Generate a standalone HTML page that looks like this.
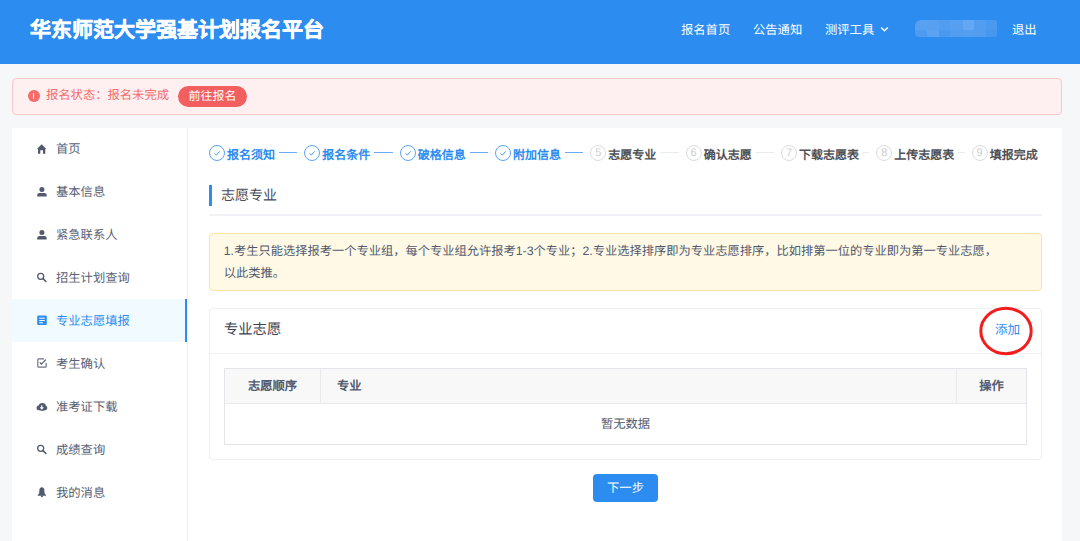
<!DOCTYPE html>
<html lang="zh-CN"><head><meta charset="utf-8">
<style>
*{box-sizing:border-box;margin:0;padding:0}
html,body{width:1080px;height:541px;overflow:hidden}
body{position:relative;text-rendering:geometricPrecision;background:#f5f7f9;font-family:"Liberation Sans",sans-serif;color:#515a6e}
.a{position:absolute;white-space:nowrap}
.hdr{left:0;top:0;width:1080px;height:64px;background:#2d8cf0}
.ttl{left:30px;top:16.5px;font-size:21px;line-height:28px;font-weight:bold;color:#fff;-webkit-text-stroke:0.5px #fff}
.nav{top:21px;font-size:12.3px;line-height:19px;color:#fff}
.alert{left:12px;top:78px;width:1050px;height:37px;border:1px solid #fbc8c8;border-radius:4px;background:#fef0f0}
.side{left:12px;top:128px;width:175px;height:413px;background:#fff}
.sdiv{left:187px;top:128px;width:1px;height:413px;background:#edeff2}
.main{left:188px;top:128px;width:874px;height:413px;background:#fff}
.mi{left:12px;width:175px;height:43px;font-size:12.3px;line-height:44px;color:#5a6173}
.mi span{position:absolute;left:44px;top:0}
.mi svg{position:absolute;left:25px;top:16px}
.mi.act{background:#f0faff;color:#2d8cf0;border-right:2px solid #2d8cf0}
.st{top:145px;height:16px}
.circ{position:absolute;left:0;top:0;width:16px;height:16px;border:1px solid #5aa5f3;border-radius:50%;font-size:11px;line-height:14px;text-align:center;color:#cdcdcd}
.circ.g{border-color:#dcdcdc}
.stt{position:absolute;left:18px;top:-0.5px;font-size:12px;line-height:20px;font-weight:bold;color:#2d8cf0}
.stt.g{color:#4f5257}
.tail{position:absolute;top:7px;height:1px;background:#68abf4}
.tail.g{background:#e8eaec}
</style></head><body>
<div class="a hdr"></div>
<div class="a ttl">华东师范大学强基计划报名平台</div>
<div class="a nav" style="left:681px">报名首页</div>
<div class="a nav" style="left:753px">公告通知</div>
<div class="a nav" style="left:825px">测评工具</div>
<svg class="a" style="left:880px;top:26px" width="9" height="7" viewBox="0 0 9 7"><path d="M1.2 1.5 L4.5 4.8 L7.8 1.5" fill="none" stroke="#fff" stroke-width="1.4"/></svg>
<div class="a nav" style="left:1012px">退出</div>
<div class="a" style="left:915px;top:19.7px;width:82px;height:17.8px;border-radius:6px 2px 2px 4px;overflow:hidden"><div class="a" style="left:0.0px;top:0;width:12.5px;height:10.3px;background:#58a0f2"></div><div class="a" style="left:0.0px;top:10.2px;width:12.5px;height:7.6px;background:#4f9bf0"></div><div class="a" style="left:12.2px;top:0;width:12.1px;height:10.3px;background:#57a0f1"></div><div class="a" style="left:12.2px;top:10.2px;width:12.1px;height:7.6px;background:#5ba3f2"></div><div class="a" style="left:24.0px;top:0;width:11.5px;height:10.3px;background:#529df0"></div><div class="a" style="left:24.0px;top:10.2px;width:11.5px;height:7.6px;background:#4a99ef"></div><div class="a" style="left:35.2px;top:0;width:12.6px;height:10.3px;background:#569ff1"></div><div class="a" style="left:35.2px;top:10.2px;width:12.6px;height:7.6px;background:#529df0"></div><div class="a" style="left:47.5px;top:0;width:12.1px;height:10.3px;background:#63a8f4"></div><div class="a" style="left:47.5px;top:10.2px;width:12.1px;height:7.6px;background:#549ef0"></div><div class="a" style="left:59.3px;top:0;width:11.5px;height:10.3px;background:#539df0"></div><div class="a" style="left:59.3px;top:10.2px;width:11.5px;height:7.6px;background:#529df0"></div><div class="a" style="left:70.5px;top:0;width:11.8px;height:10.3px;background:#4a99ef"></div><div class="a" style="left:70.5px;top:10.2px;width:11.8px;height:7.6px;background:#4797ee"></div></div>

<div class="a alert"></div>
<div class="a" style="left:27.5px;top:89.5px;width:12.5px;height:12.5px;border-radius:50%;background:#f56c6c"></div>
<div class="a" style="left:33.2px;top:92.5px;width:1.2px;height:6.5px;background:#fff"></div>
<div class="a" style="left:46px;top:86px;font-size:12.3px;line-height:19px;color:#f56c6c">报名状态：报名未完成</div>
<div class="a" style="left:178px;top:85.5px;width:69px;height:21px;border-radius:11px;background:#f35e5e;color:#fff;font-size:12px;line-height:21px;text-align:center">前往报名</div>

<div class="a side"></div>
<div class="a sdiv"></div>
<div class="a main"></div>


<div class="a st" style="left:209.00px;width:95.33px">
<div class="tail" style="left:70px;width:18.33px"></div>
<div class="circ"><svg width="14" height="14" viewBox="0 0 14 14" style="position:absolute;left:0;top:0"><path d="M4.6 7.4 L6.4 9.2 L9.6 5.4" fill="none" stroke="#2d8cf0" stroke-width="0.9"/></svg></div><div class="stt">报名须知</div></div>
<div class="a st" style="left:304.33px;width:95.33px">
<div class="tail" style="left:70px;width:18.33px"></div>
<div class="circ"><svg width="14" height="14" viewBox="0 0 14 14" style="position:absolute;left:0;top:0"><path d="M4.6 7.4 L6.4 9.2 L9.6 5.4" fill="none" stroke="#2d8cf0" stroke-width="0.9"/></svg></div><div class="stt">报名条件</div></div>
<div class="a st" style="left:399.66px;width:95.33px">
<div class="tail" style="left:70px;width:18.33px"></div>
<div class="circ"><svg width="14" height="14" viewBox="0 0 14 14" style="position:absolute;left:0;top:0"><path d="M4.6 7.4 L6.4 9.2 L9.6 5.4" fill="none" stroke="#2d8cf0" stroke-width="0.9"/></svg></div><div class="stt">破格信息</div></div>
<div class="a st" style="left:494.99px;width:95.33px">
<div class="tail" style="left:70px;width:18.33px"></div>
<div class="circ"><svg width="14" height="14" viewBox="0 0 14 14" style="position:absolute;left:0;top:0"><path d="M4.6 7.4 L6.4 9.2 L9.6 5.4" fill="none" stroke="#2d8cf0" stroke-width="0.9"/></svg></div><div class="stt">附加信息</div></div>
<div class="a st" style="left:590.32px;width:95.33px">
<div class="tail g" style="left:70px;width:18.33px"></div>
<div class="circ g">5</div><div class="stt g">志愿专业</div></div>
<div class="a st" style="left:685.65px;width:95.33px">
<div class="tail g" style="left:70px;width:18.33px"></div>
<div class="circ g">6</div><div class="stt g">确认志愿</div></div>
<div class="a st" style="left:780.98px;width:95.33px">
<div class="tail g" style="left:82px;width:6.33px"></div>
<div class="circ g">7</div><div class="stt g">下载志愿表</div></div>
<div class="a st" style="left:876.31px;width:95.33px">
<div class="tail g" style="left:82px;width:6.33px"></div>
<div class="circ g">8</div><div class="stt g">上传志愿表</div></div>
<div class="a st" style="left:971.64px;width:95.33px">
<div class="circ g">9</div><div class="stt g">填报完成</div></div>
<div class="a" style="left:209px;top:185px;width:2.6px;height:20.7px;background:#2d8cf0"></div>
<div class="a" style="left:221px;top:184px;font-size:14px;line-height:22px;color:#464c5b">志愿专业</div>
<div class="a" style="left:209px;top:214px;width:833px;height:2px;background:#f1f2f5"></div>
<div class="a" style="left:209px;top:233px;width:833px;height:58px;border:1px solid #ffe3a0;border-radius:4px;background:#fff9e6"></div>
<div class="a" style="left:223.8px;top:240.2px;width:805px;white-space:normal;font-size:12.25px;line-height:22.2px;color:#515a6e">1.考生只能选择报考一个专业组，每个专业组允许报考1-3个专业；2.专业选择排序即为专业志愿排序，比如排第一位的专业即为第一专业志愿，<br>以此类推。</div>
<div class="a" style="left:209px;top:308px;width:833px;height:152px;border:1px solid #edeff2;border-radius:4px;background:#fff"></div>
<div class="a" style="left:209px;top:352.8px;width:833px;height:1px;background:#eef0f2"></div>
<div class="a" style="left:224px;top:318px;font-size:14.3px;line-height:22px;color:#3d4350;padding-top:0.5px">专业志愿</div>
<div class="a" style="left:995px;top:320px;font-size:12.6px;line-height:20px;color:#2d8cf0">添加</div>
<div class="a" style="left:224px;top:368px;width:803px;height:77px;border:1px solid #e3e5e9;background:#fff"></div>
<div class="a" style="left:225px;top:369px;width:801px;height:34.5px;background:#f8f8f9;border-bottom:1px solid #e8eaec"></div>
<div class="a" style="left:320px;top:369px;width:1px;height:34.5px;background:#e8eaec"></div>
<div class="a" style="left:956px;top:369px;width:1px;height:34.5px;background:#e8eaec"></div>
<div class="a" style="left:224px;top:376px;width:97px;text-align:center;font-size:12.3px;line-height:20px;font-weight:bold;color:#515a6e">志愿顺序</div>
<div class="a" style="left:337px;top:376px;font-size:12.3px;line-height:20px;font-weight:bold;color:#515a6e">专业</div>
<div class="a" style="left:956px;top:376px;width:71px;text-align:center;font-size:12.3px;line-height:20px;font-weight:bold;color:#515a6e">操作</div>
<div class="a" style="left:224px;top:414px;width:803px;text-align:center;font-size:12.3px;line-height:20px;color:#515a6e">暂无数据</div>
<div class="a" style="left:593px;top:473.5px;width:65px;height:28px;border-radius:4px;background:#2d8cf0;color:#fff;text-align:center;font-size:12.3px;line-height:28px">下一步</div>
<svg class="a" style="left:975px;top:303px" width="62" height="56" viewBox="0 0 62 56"><ellipse cx="31" cy="28" rx="25.2" ry="22.7" fill="none" stroke="#f21d1d" stroke-width="3"/></svg>

<div class="a mi" style="top:127px"><span>首页</span></div>
<div class="a mi" style="top:170px"><span>基本信息</span></div>
<div class="a mi" style="top:213px"><span>紧急联系人</span></div>
<div class="a mi" style="top:256px"><span>招生计划查询</span></div>
<div class="a mi act" style="top:299px"><span>专业志愿填报</span></div>
<div class="a mi" style="top:342px"><span>考生确认</span></div>
<div class="a mi" style="top:385px"><span>准考证下载</span></div>
<div class="a mi" style="top:428px"><span>成绩查询</span></div>
<div class="a mi" style="top:471px"><span>我的消息</span></div>

<svg class="a" style="left:0;top:0" width="1080" height="541" viewBox="0 0 1080 541">
<g fill="#515a6e">
<path d="M37 148.9 L41.65 144.3 L46.3 148.9 L45.3 148.9 L45.3 153.7 L43 153.7 L43 150.3 L40.3 150.3 L40.3 153.7 L38 153.7 L38 148.9 Z"/>
<circle cx="41.9" cy="189.4" r="2.5"/>
<path d="M37.2 196.4 L37.2 195.4 Q37.2 193.1 39.8 193.1 L44.1 193.1 Q46.7 193.1 46.7 195.4 L46.7 196.4 Z"/>
<circle cx="41.9" cy="232.4" r="2.5"/>
<path d="M37.2 239.4 L37.2 238.4 Q37.2 236.1 39.8 236.1 L44.1 236.1 Q46.7 236.1 46.7 238.4 L46.7 239.4 Z"/>
<circle cx="38.9" cy="407.9" r="2.4"/>
<circle cx="42.3" cy="406.9" r="3.8"/>
<circle cx="45" cy="408" r="2.3"/>
<rect x="38.9" y="406" width="6.1" height="4.3"/>
<path d="M41.85 487.2 C43.3 487.2 44.3 488.4 44.3 490 L44.6 493.5 L46 495.1 L46 495.8 L37.7 495.8 L37.7 495.1 L39.1 493.5 L39.4 490 C39.4 488.4 40.4 487.2 41.85 487.2 Z"/>
<circle cx="41.85" cy="496.3" r="1"/>
</g>
<g fill="none" stroke="#515a6e">
<circle cx="40.7" cy="276.3" r="3" stroke-width="1.3"/>
<path d="M43 278.6 L45.9 281.5" stroke-width="1.6" stroke-linecap="round"/>
<circle cx="40.7" cy="448.3" r="3" stroke-width="1.3"/>
<path d="M43 450.6 L45.9 453.5" stroke-width="1.6" stroke-linecap="round"/>
<path d="M44.2 358.9 L38.7 358.9 Q37.8 358.9 37.8 359.8 L37.8 366.3 Q37.8 367.2 38.7 367.2 L45.3 367.2 Q46.2 367.2 46.2 366.3 L46.2 362.7" stroke-width="1.2" stroke="#6b7385"/>
<path d="M39.8 362.4 L41.4 364.2 L45.8 359.6" stroke-width="1.2"/>
</g>
<path d="M41.8 405.3 L41.8 408.6 M40.3 407.4 L41.8 409 L43.3 407.4" fill="none" stroke="#fff" stroke-width="1.1"/>
<rect x="37.2" y="315.5" width="9.6" height="9.5" rx="1.2" fill="#2d8cf0"/>
<g fill="#fff"><rect x="39.2" y="317.7" width="5.5" height="1"/><rect x="39.2" y="320" width="5.5" height="1"/><rect x="39.2" y="322.3" width="3.8" height="1"/></g>
</svg>
</body></html>
